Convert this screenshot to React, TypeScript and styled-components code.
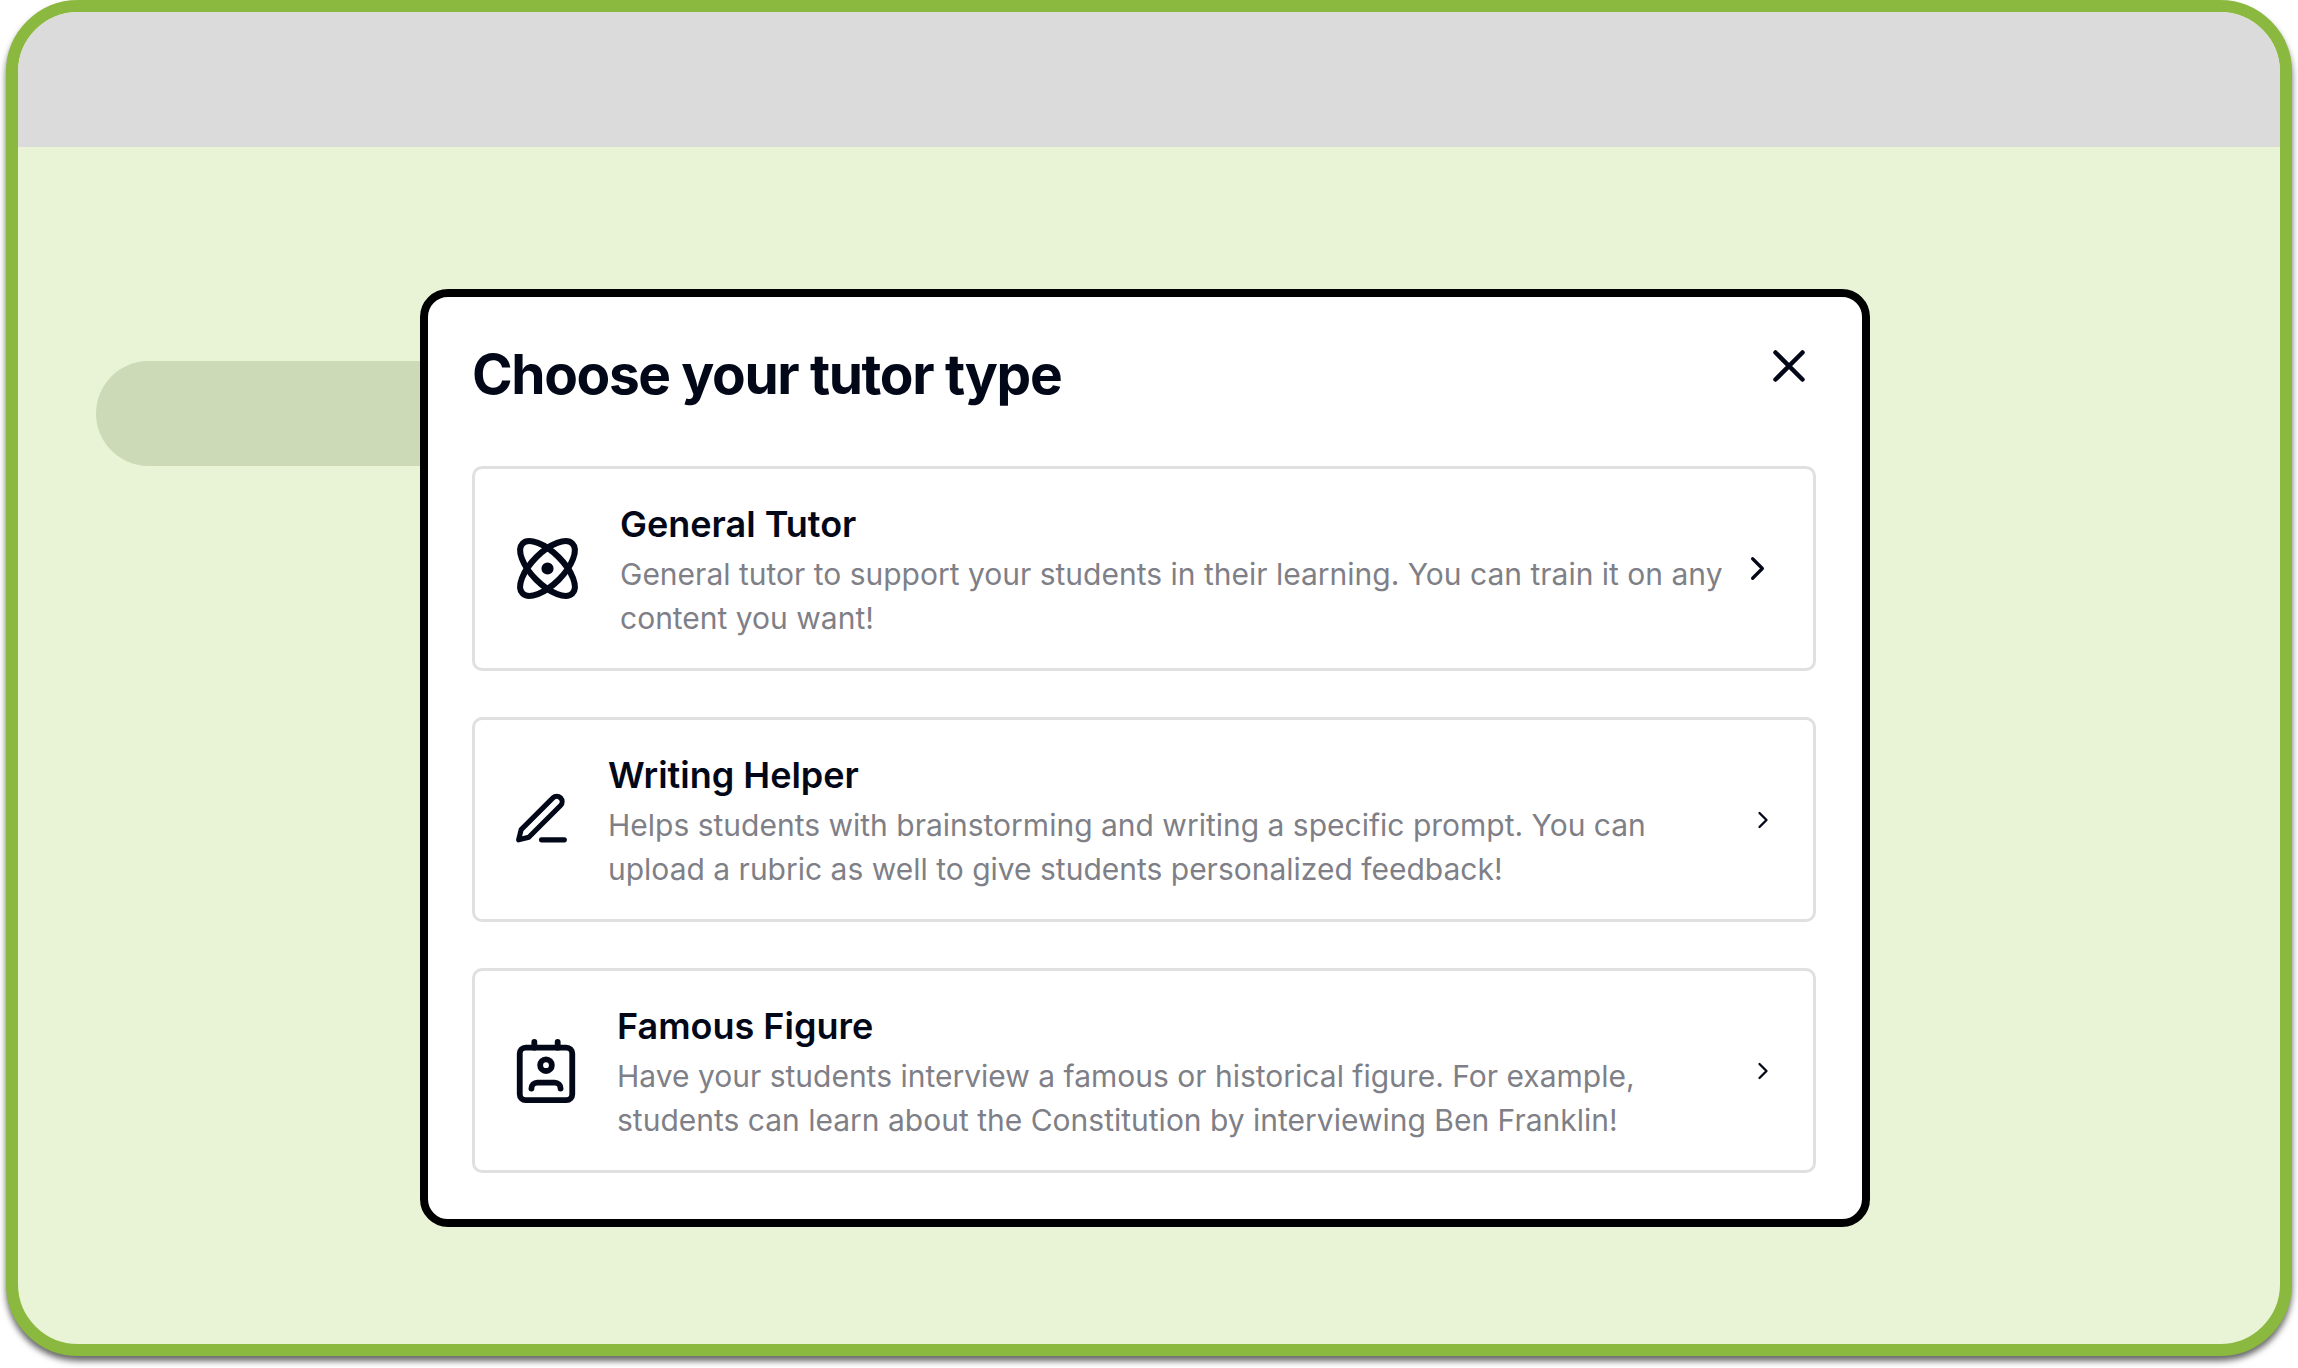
import React from "react";
import styled, { createGlobalStyle } from "styled-components";

const ink = "#020817";

const GlobalStyle = createGlobalStyle`
  *, *::before, *::after { box-sizing: border-box; }
  body {
    margin: 0;
    background: #ffffff;
    font-family: Inter, "Liberation Sans", sans-serif;
    color: ${ink};
  }
`;

const Page = styled.div`
  min-height: 100vh;
  padding: 0 6px 12px;
  display: flex;
`;

const Frame = styled.div`
  flex: 1;
  display: flex;
  flex-direction: column;
  overflow: hidden;
  border: 12px solid #8bb83f;
  border-radius: 72px;
  background: #e8f4d5;
  box-shadow: 0 5px 6px rgba(0, 0, 0, 0.6);
`;

const TopBar = styled.header`
  height: 135px;
  background: #dbdbdb;
`;

const Stage = styled.main`
  flex: 1;
  display: grid;
  align-items: start;
  padding: 142px 410px 116px 78px;
`;

const Pill = styled.div`
  grid-area: 1 / 1;
  width: 50%;
  height: 105px;
  margin-top: 72px;
  border-radius: 53px;
  background: #cddab7;
`;

const Dialog = styled.section`
  grid-area: 1 / 1;
  margin-left: 324px;
  padding: 42px 46px 46px 44px;
  border: 8px solid #000000;
  border-radius: 28px;
  background: #ffffff;
`;

const DialogHeader = styled.div`
  display: flex;
  justify-content: space-between;
  align-items: flex-start;
  height: 127px;
`;

const Title = styled.h1`
  margin: 0;
  padding-top: 5px;
  font-size: 55px;
  line-height: 60px;
  font-weight: 700;
  letter-spacing: -0.025em;
`;

const CloseButton = styled.button`
  display: flex;
  padding: 0;
  border: 0;
  background: none;
  color: ${ink};
  cursor: pointer;
`;

const Options = styled.div`
  display: flex;
  flex-direction: column;
  gap: 46px;
`;

const Option = styled.button`
  display: flex;
  align-items: center;
  width: 100%;
  padding: 28px 36px;
  border: 3px solid #e0e0e0;
  border-radius: 10px;
  background: #ffffff;
  color: ${ink};
  font: inherit;
  text-align: left;
  cursor: pointer;
`;

const Copy = styled.span`
  flex: 1;
  margin: 0 12px 0 36px;
`;

const Name = styled.span`
  display: block;
  font-size: 36px;
  line-height: 55px;
  font-weight: 600;
`;

const Description = styled.span`
  display: block;
  font-size: 30px;
  line-height: 44px;
  color: #7f7f87;
`;

const Glyph = styled.svg.attrs({
  viewBox: "0 0 24 24",
  fill: "none",
  stroke: "currentColor",
  strokeWidth: 2,
  strokeLinecap: "round",
  strokeLinejoin: "round",
  "aria-hidden": true,
})<{ $size: number }>`
  flex: none;
  width: ${(p) => p.$size}px;
  height: ${(p) => p.$size}px;
`;

const options = [
  {
    name: "General Tutor",
    text: "General tutor to support your students in their learning. You can train it on any content you want!",
    size: 73,
    arrow: 39,
    icon: (
      <>
        <circle cx="12" cy="12" r="1" />
        <path d="M20.2 20.2c2.04-2.03.02-7.36-4.5-11.9-4.54-4.52-9.87-6.54-11.9-4.5-2.04 2.03-.02 7.36 4.5 11.9 4.54 4.52 9.87 6.54 11.9 4.5Z" />
        <path d="M15.7 15.7c4.52-4.54 6.54-9.87 4.5-11.9-2.03-2.04-7.36-.02-11.9 4.5-4.52 4.54-6.54 9.87-4.5 11.9 2.03 2.04 7.36.02 11.9-4.5Z" />
      </>
    ),
  },
  {
    name: "Writing Helper",
    text: "Helps students with brainstorming and writing a specific prompt. You can upload a rubric as well to give students personalized feedback!",
    size: 61,
    arrow: 28,
    icon: (
      <>
        <path d="M12 20h9" />
        <path d="M16.5 3.5a2.12 2.12 0 0 1 3 3L7 19l-4 1 1-4Z" />
      </>
    ),
  },
  {
    name: "Famous Figure",
    text: "Have your students interview a famous or historical figure. For example, students can learn about the Constitution by interviewing Ben Franklin!",
    size: 70,
    arrow: 28,
    icon: (
      <>
        <path d="M17 18a2 2 0 0 0-2-2H9a2 2 0 0 0-2 2" />
        <rect x="3" y="4" width="18" height="18" rx="2" />
        <circle cx="12" cy="10" r="2" />
        <path d="M8 2v2M16 2v2" />
      </>
    ),
  },
];

export default function App() {
  return (
    <>
      <GlobalStyle />
      <Page>
        <Frame>
          <TopBar />
          <Stage>
            <Pill />
            <Dialog role="dialog" aria-labelledby="dialog-title">
              <DialogHeader>
                <Title id="dialog-title">Choose your tutor type</Title>
                <CloseButton type="button" aria-label="Close">
                  <Glyph $size={54}>
                    <path d="M18 6 6 18M6 6l12 12" />
                  </Glyph>
                </CloseButton>
              </DialogHeader>
              <Options>
                {options.map((o) => (
                  <Option type="button" key={o.name}>
                    <Glyph $size={o.size}>{o.icon}</Glyph>
                    <Copy>
                      <Name>{o.name}</Name>
                      <Description>{o.text}</Description>
                    </Copy>
                    <Glyph $size={o.arrow}>
                      <path d="m9 18 6-6-6-6" />
                    </Glyph>
                  </Option>
                ))}
              </Options>
            </Dialog>
          </Stage>
        </Frame>
      </Page>
    </>
  );
}
